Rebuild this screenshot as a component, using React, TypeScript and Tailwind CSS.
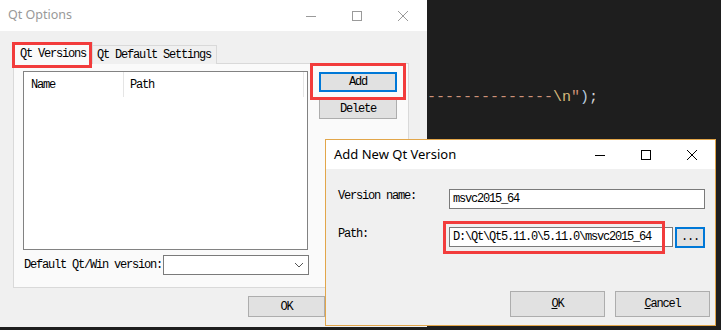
import React from "react";

const mono = { fontFamily: '"Liberation Mono", "DejaVu Sans Mono", monospace' };
const ui = { fontFamily: '"Noto Sans", "Open Sans", sans-serif' };

function WinControls({ color, className }: { color: string; className?: string }) {
  return (
    <div className={className}>
      <svg width="12" height="12" viewBox="0 0 12 12" className="shrink-0">
        <line x1="1" y1="6.5" x2="11" y2="6.5" stroke={color} strokeWidth="1" />
      </svg>
      <svg width="12" height="12" viewBox="0 0 12 12" className="shrink-0">
        <rect x="1.5" y="1.5" width="9" height="9" fill="none" stroke={color} strokeWidth="1" />
      </svg>
      <svg width="12" height="12" viewBox="0 0 12 12" className="shrink-0">
        <path d="M1 1 L11 11 M11 1 L1 11" stroke={color} strokeWidth="1" />
      </svg>
    </div>
  );
}

export default function App() {
  return (
    <div className="relative w-[721px] h-[330px] overflow-hidden bg-[#1e1e1e]">
      {/* code editor line */}
      <div
        className="absolute left-[418px] top-[88px] text-[15px] leading-[20px] whitespace-pre"
        style={mono}
      >
        <span className="text-[#ce9178]">---------------</span>
        <span className="text-[#d7ba7d]">\n</span>
        <span className="text-[#ce9178]">"</span>
        <span className="text-[#b4c8dc]">)</span>
        <span className="text-[#d4d4d4]">;</span>
      </div>

      {/* Qt Options dialog */}
      <div className="absolute left-0 top-0 w-[427px] h-[327px] bg-[#f0f0f0] flex flex-col">
        <div className="h-[31px] bg-white flex items-center pl-[8px] shrink-0">
          <span className="text-[12.5px] text-[#999999]" style={ui}>Qt Options</span>
          <WinControls color="#9a9a9a" className="ml-auto mr-[18px] flex gap-[34px] items-center" />
        </div>
        <div className="flex flex-col pl-[13px] pt-[11px]">
          {/* tabs */}
          <div className="flex items-end h-[22px] relative z-10 -mb-px">
            <div className="relative w-[80px] h-[22px] bg-[#fafafa] border border-b-0 border-[#d9d9d9] flex items-center pl-[6px]">
              <span className="text-[12px] tracking-[-1.2px] text-black whitespace-nowrap" style={mono}>Qt Versions</span>
              <div className="absolute left-[-2px] top-[-1px] w-[80px] h-[26px] border-[3px] border-[#f23c3c]" />
            </div>
            <div className="w-[124px] h-[19px] bg-[#f0f0f0] border border-l-0 border-b-0 border-[#d9d9d9] flex items-center pl-[4px]">
              <span className="text-[12px] tracking-[-1.2px] text-black whitespace-nowrap" style={mono}>Qt Default Settings</span>
            </div>
          </div>
          {/* panel */}
          <div className="w-[396px] h-[225px] bg-[#fafafa] border border-[#d9d9d9] pl-[9px] pt-[7px] flex flex-col">
            <div className="flex">
              <div className="w-[285px] h-[179px] bg-white border border-[#828282] flex flex-col">
                <div className="flex h-[25px] items-center text-[12px] tracking-[-1.2px] text-black" style={mono}>
                  <div className="w-[100px] h-full pl-[7px] flex items-center border-r border-[#e5e5e5]">Name</div>
                  <div className="w-[180px] h-full pl-[6px] flex items-center border-r border-[#e5e5e5]">Path</div>
                </div>
              </div>
              <div className="ml-[11px] pt-[1px] flex flex-col gap-[7px]">
                <div className="relative">
                  <div className="w-[78px] h-[20px] bg-[#e1e1e1] border-2 border-[#0078d7] flex items-center justify-center">
                    <span className="text-[12px] tracking-[-1.2px] text-black" style={mono}>Add</span>
                  </div>
                  <div className="absolute left-[-9px] top-[-9px] w-[96px] h-[37px] border-[3px] border-[#f23c3c]" />
                </div>
                <div className="w-[78px] h-[20px] bg-[#e1e1e1] border border-[#adadad] flex items-center justify-center">
                  <span className="text-[12px] tracking-[-1.2px] text-black" style={mono}>Delete</span>
                </div>
              </div>
            </div>
            <div className="flex items-center mt-[5px] pl-[1px]">
              <span className="w-[139px] shrink-0 text-[12px] tracking-[-1.2px] text-black whitespace-nowrap" style={mono}>Default Qt/Win version:</span>
              <div className="w-[146px] h-[20px] bg-white border border-[#7a7a7a] flex items-center justify-end pr-[4px]">
                <svg width="10" height="6" viewBox="0 0 10 6">
                  <path d="M1 1 L5 5 L9 1" fill="none" stroke="#555" strokeWidth="1" />
                </svg>
              </div>
            </div>
          </div>
          <div className="flex pl-[235px] pt-[8px]">
            <div className="w-[77px] h-[21px] bg-[#e1e1e1] border border-[#adadad] flex items-center justify-center">
              <span className="text-[12px] tracking-[-1.2px] text-black" style={mono}>OK</span>
            </div>
          </div>
        </div>
      </div>

      {/* Add New Qt Version dialog */}
      <div className="absolute left-[325px] top-[139px] w-[391px] h-[187px] bg-[#f0f0f0] border border-[#e2a64a] flex flex-col">
        <div className="h-[29px] bg-white flex items-center pl-[8px] shrink-0">
          <span className="text-[13px] text-black" style={ui}>Add New Qt Version</span>
          <WinControls color="#000000" className="ml-auto mr-[17px] flex gap-[34px] items-center" />
        </div>
        <div className="flex flex-col pl-[12px] pt-[20px]">
          <div className="flex items-center h-[20px]">
            <span className="w-[111px] shrink-0 self-start leading-[14px] text-[12px] tracking-[-1.2px] text-black whitespace-nowrap" style={mono}>Version name:</span>
            <div className="w-[256px] h-[20px] bg-white border border-[#7a7a7a] flex items-center pl-[3px]">
              <span className="text-[12px] tracking-[-1.2px] text-black whitespace-nowrap" style={mono}>msvc2015_64</span>
            </div>
          </div>
          <div className="flex items-center h-[20px] mt-[18px]">
            <span className="w-[111px] shrink-0 self-start leading-[14px] text-[12px] tracking-[-1.2px] text-black whitespace-nowrap" style={mono}>Path:</span>
            <div className="relative w-[224px] h-[20px] bg-white border border-[#7a7a7a] flex items-center pl-[3px]">
              <span className="text-[12px] tracking-[-1.2px] text-black whitespace-nowrap" style={mono}>D:\Qt\Qt5.11.0\5.11.0\msvc2015_64</span>
              <div className="absolute left-[-7px] top-[-7px] w-[222px] h-[33px] border-[3px] border-[#f23c3c]" />
            </div>
            <div className="ml-[2px] w-[30px] h-[21px] bg-[#e1e1e1] border-2 border-[#0078d7] flex items-center justify-center">
              <span className="text-[12px] tracking-[-1.2px] text-black" style={mono}>...</span>
            </div>
          </div>
          <div className="flex gap-[10px] pl-[172px] mt-[44px]">
            <div className="w-[95px] h-[26px] bg-[#e1e1e1] border border-[#adadad] flex items-center justify-center">
              <span className="text-[12px] tracking-[-1.2px] text-black" style={mono}><span className="underline">O</span>K</span>
            </div>
            <div className="w-[95px] h-[26px] bg-[#e1e1e1] border border-[#adadad] flex items-center justify-center">
              <span className="text-[12px] tracking-[-1.2px] text-black" style={mono}><span className="underline">C</span>ancel</span>
            </div>
          </div>
        </div>
      </div>
    </div>
  );
}
